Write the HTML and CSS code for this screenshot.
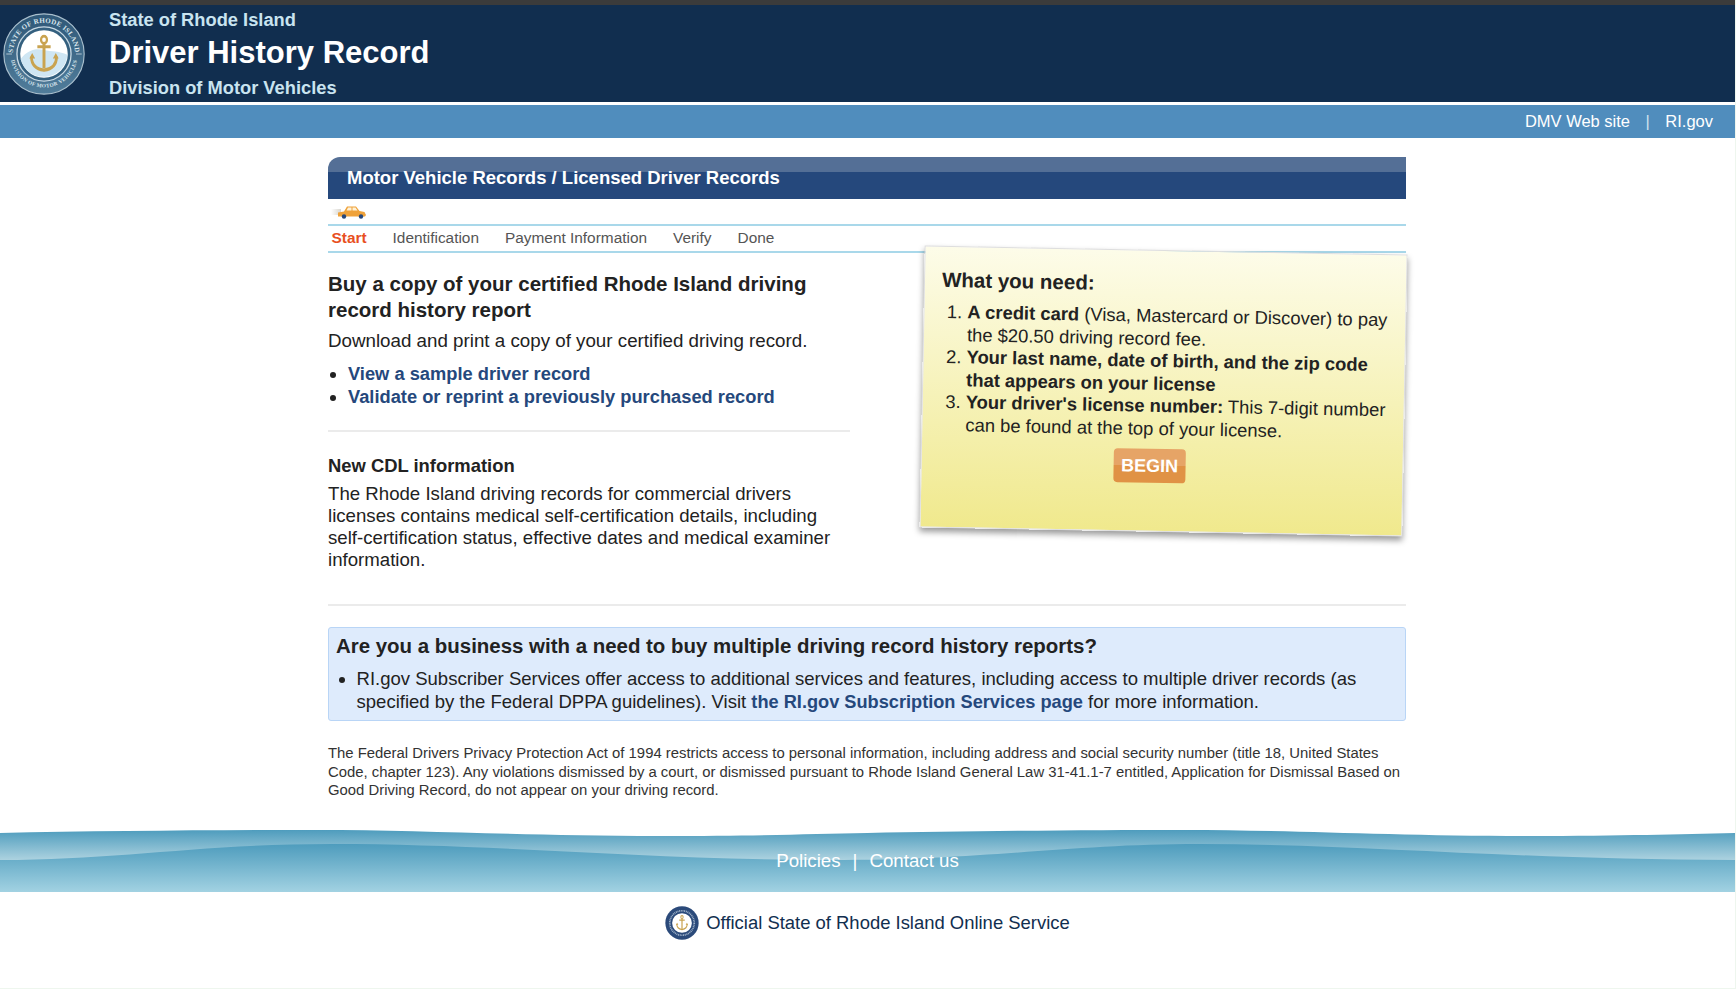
FILE: index.html
```html
<!DOCTYPE html>
<html lang="en">
<head>
    <meta charset="UTF-8">
    <title>Driver History Record</title>
    <link rel="stylesheet" href="styles.css">
</head>
<body>
    <svg class="defs" width="0" height="0" aria-hidden="true">
        <symbol id="anchor" viewBox="0 0 40 44" preserveAspectRatio="none">
            <circle cx="20" cy="6" r="4" fill="none" stroke="#c9a350" stroke-width="3"/>
            <path d="M11 14h18" stroke="#c9a350" stroke-width="3.4" fill="none"/>
            <path d="M20 10v28" stroke="#c9a350" stroke-width="4" fill="none"/>
            <path d="M3 25c0 10 8 14 17 15 9-1 17-5 17-15" stroke="#c9a350" stroke-width="3.6" fill="none"/>
            <path d="M0 27l4-6 4 6zM32 27l4-6 4 6z" fill="#c9a350"/>
        </symbol>
    </svg>

    <div class="topline"></div>

    <header class="header">
        <svg class="seal" viewBox="0 0 100 100" role="img" aria-label="Seal of the State of Rhode Island">
            <defs>
                <linearGradient id="ring" x1="0" y1="0" x2="0" y2="1">
                    <stop offset="0" stop-color="#2f5878"/>
                    <stop offset="1" stop-color="#517d9b"/>
                </linearGradient>
                <path id="seal-top" d="M12 50a38 38 0 0 1 76 0"/>
                <path id="seal-bottom" d="M9 50a41 41 0 0 0 82 0"/>
            </defs>
            <circle cx="50" cy="50" r="49" fill="url(#ring)" stroke="#a9bfcd" stroke-width="1.4"/>
            <text class="seal-text"><textPath href="#seal-top" startOffset="50%" text-anchor="middle">STATE OF RHODE ISLAND</textPath></text>
            <text class="seal-text small"><textPath href="#seal-bottom" startOffset="50%" text-anchor="middle">DIVISION OF MOTOR VEHICLES</textPath></text>
            <path d="M4 50h7M89 50h7" stroke="#c6d6e0" stroke-width="1"/>
            <circle cx="50" cy="50" r="33" fill="#34607f" stroke="#c8d9e4" stroke-width="1.6"/>
            <circle cx="50" cy="50" r="29" fill="#fff"/>
            <path d="M21.500 56c9-11 18-13 28-11 10 2 19 1 29 6a29 29 0 0 1-57 5z" fill="#cfe6f3"/>
            <use href="#anchor" x="32" y="26" width="36" height="48"/>
        </svg>
        <div class="header-titles">
            <div class="state">State of Rhode Island</div>
            <h1>Driver History Record</h1>
            <div class="division">Division of Motor Vehicles</div>
        </div>
    </header>

    <nav class="topnav">
        <a href="#">DMV Web site</a>
        <span class="sep">|</span>
        <a href="#">RI.gov</a>
    </nav>

    <main class="content">
        <h2 class="section-title">Motor Vehicle Records / Licensed Driver Records</h2>

        <div class="car-row">
            <svg class="car" viewBox="0 0 40 16" width="40" height="16" aria-hidden="true">
                <defs>
                    <linearGradient id="blur" x1="0" y1="0" x2="1" y2="0">
                        <stop offset="0" stop-color="#fff"/>
                        <stop offset="1" stop-color="#d8d5ce"/>
                    </linearGradient>
                </defs>
                <rect x="3" y="5" width="10" height="6" fill="url(#blur)"/>
                <path d="M10 8.500l6-1 3-5h9l3.500 4.500 5 1 1.500 3-1 1.500h-27z" fill="#efa23a"/>
                <path d="M20 3.500h3.500v3h-5zM24.500 3.500h3l2 3h-5z" fill="#fff1d6"/>
                <circle cx="16" cy="12.500" r="2.200" fill="#27487c"/>
                <circle cx="33" cy="12.500" r="2.200" fill="#27487c"/>
            </svg>
        </div>

        <ul class="steps">
            <li class="active">Start</li>
            <li>Identification</li>
            <li>Payment Information</li>
            <li>Verify</li>
            <li>Done</li>
        </ul>

        <div class="columns">
            <div class="left-col">
                <h3 class="lead">Buy a copy of your certified Rhode Island driving record history report</h3>
                <p class="lead-text">Download and print a copy of your certified driving record.</p>
                <ul class="links">
                    <li><a href="#">View a sample driver record</a></li>
                    <li><a href="#">Validate or reprint a previously purchased record</a></li>
                </ul>
                <hr class="rule">
                <h4 class="cdl-title">New CDL information</h4>
                <p class="cdl-text">The Rhode Island driving records for commercial drivers licenses contains medical self-certification details, including self-certification status, effective dates and medical examiner information.</p>
            </div>

            <aside class="note">
                <h3>What you need:</h3>
                <ol>
                    <li><b>A credit card</b> (Visa, Mastercard or Discover) to pay the $20.50 driving record fee.</li>
                    <li><b>Your last name, date of birth, and the zip code that appears on your license</b></li>
                    <li><b>Your driver's license number:</b> This 7-digit number can be found at the top of your license.</li>
                </ol>
                <div class="note-action">
                    <a class="begin" href="#">BEGIN</a>
                </div>
            </aside>
        </div>

        <hr class="rule full">

        <section class="business">
            <h3>Are you a business with a need to buy multiple driving record history reports?</h3>
            <ul>
                <li>RI.gov Subscriber Services offer access to additional services and features, including access to multiple driver records (as specified by the Federal DPPA guidelines). Visit <a href="#">the RI.gov Subscription Services page</a> for more information.</li>
            </ul>
        </section>

        <p class="fine-print">The Federal Drivers Privacy Protection Act of 1994 restricts access to personal information, including address and social security number (title 18, United States Code, chapter 123). Any violations dismissed by a court, or dismissed pursuant to Rhode Island General Law 31-41.1-7 entitled, Application for Dismissal Based on Good Driving Record, do not appear on your driving record.</p>
    </main>

    <footer class="footer">
        <div class="wave-band">
            <svg class="wave" viewBox="0 0 1736 62" preserveAspectRatio="none" aria-hidden="true">
                <defs>
                    <linearGradient id="wave-upper" gradientUnits="userSpaceOnUse" x1="0" y1="0" x2="0" y2="32">
                        <stop offset="0" stop-color="#4e9cbd"/>
                        <stop offset="1" stop-color="#b3d6e2"/>
                    </linearGradient>
                    <linearGradient id="wave-lower" gradientUnits="userSpaceOnUse" x1="0" y1="14" x2="0" y2="62">
                        <stop offset="0" stop-color="#4e9cbd"/>
                        <stop offset="1" stop-color="#a2d2e2"/>
                    </linearGradient>
                </defs>
                <path d="M0 3C100 1 220 0 315 0C430 0 520 6 660 6C760 6 810 4 868 3C968 1 1088 0 1183 0C1298 0 1388 6 1528 6C1628 6 1678 4 1736 3V62H0Z" fill="url(#wave-upper)"/>
                <path d="M0 30C120 30 200 14 332 14C500 14 650 30 830 30C990 30 1068 14 1200 14C1368 14 1518 30 1736 30V62H0Z" fill="url(#wave-lower)"/>
            </svg>
            <div class="footer-links">
                <a href="#">Policies</a>
                <span class="sep">|</span>
                <a href="#">Contact us</a>
            </div>
        </div>
        <div class="official">
            <svg class="mini-seal" viewBox="0 0 100 100" aria-hidden="true">
                <circle cx="50" cy="50" r="49" fill="#2b4a7a"/>
                <circle cx="50" cy="50" r="36" fill="none" stroke="#9fb2c9" stroke-width="5" stroke-dasharray="3 2"/>
                <circle cx="50" cy="50" r="29" fill="#fff"/>
                <use href="#anchor" x="32" y="26" width="36" height="48"/>
            </svg>
            <span>Official State of Rhode Island Online Service</span>
        </div>
    </footer>
</body>
</html>
```

FILE: styles.css
```css
* {
    box-sizing: border-box;
}

body {
    margin: 0;
    font-family: "Liberation Sans", Arial, sans-serif;
    color: #222;
    background: white;
    border-right: 1px solid #eef6ee;
}

a {
    text-decoration: none;
}

.defs {
    position: absolute;
}

.topline {
    height: 5px;
    background: #3b3b3b;
}

.header {
    height: 97px;
    background: #112e4f;
    display: flex;
    align-items: flex-start;
    padding-left: 3px;
    gap: 24px;
}

.seal {
    width: 82px;
    height: 82px;
    flex: none;
    align-self: center;
    margin-top: 1px;
}

.seal-text {
    font-family: "Liberation Serif", serif;
    font-size: 8.5px;
    font-weight: 700;
    fill: #dbe7ee;
    letter-spacing: 0.4px;
}

.seal-text.small {
    font-size: 6.5px;
}

.state, .division {
    font-size: 18.300px;
    font-weight: 700;
    color: #c9e4f0;
    line-height: 22px;
}

.header h1 {
    margin: 1px 0 2.5px;
    font-size: 31px;
    line-height: 42px;
    font-weight: 700;
    color: white;
}

.header-titles {
    margin-top: 4px;
}

.topnav {
    margin-top: 3px;
    height: 33px;
    background: #508dbd;
    display: flex;
    justify-content: flex-end;
    align-items: center;
    padding-right: 22px;
    gap: 15.5px;
    font-size: 16.500px;
    color: #cfe2ee;
}

.topnav a {
    color: white;
}

.content {
    width: 1078px;
    margin: 19px 0 0 328px;
}

.section-title {
    margin: 0;
    height: 42px;
    padding-left: 19px;
    font-size: 18.500px;
    line-height: 42px;
    font-weight: 700;
    color: white;
    border-radius: 12px 0 0 0;
    background: linear-gradient(#546f96 0, #546f96 15px, #25487c 15px);
}

.car-row {
    height: 25px;
    padding: 5px 0 0;
}

.car {
    display: block;
}

.steps {
    list-style: none;
    margin: 0;
    padding: 0 0 2px 3.5px;
    height: 29px;
    display: flex;
    gap: 26px;
    align-items: center;
    font-size: 15.400px;
    color: #555;
    border-top: 2px solid #a9d8ea;
    border-bottom: 2px solid #a9d8ea;
}

.steps .active {
    color: #e8501f;
    font-weight: 700;
}

.columns {
    display: flex;
    gap: 72px;
    align-items: flex-start;
}

.left-col {
    width: 522px;
    flex: none;
}

.lead {
    margin: 18px 0 0;
    font-size: 20.500px;
    line-height: 26px;
    font-weight: 700;
}

.lead-text {
    margin: 6px 0 0;
    font-size: 18.750px;
    line-height: 24px;
}

.links {
    margin: 9px 0 0;
    padding: 0 0 0 20px;
    font-size: 18.300px;
    line-height: 23px;
}

.links a {
    color: #25487c;
    font-weight: 700;
}

.rule {
    border: none;
    height: 2px;
    background: #ebebeb;
    margin: 22px 0 0;
}

.rule.full {
    margin-top: 0;
}

.cdl-title {
    margin: 23px 0 0;
    font-size: 18.400px;
    line-height: 22px;
    font-weight: 700;
}

.cdl-text {
    margin: 6px 0 0;
    font-size: 18.650px;
    line-height: 22px;
    height: 121px;
}

.note {
    width: 483px;
    height: 282px;
    flex: none;
    margin-top: -3px;
    padding: 20px 16px 0 17px;
    border: 1px solid #dedede;
    background: linear-gradient(#fdfce9, #f0e98d);
    box-shadow: 0 4px 6px rgba(0, 0, 0, 0.4);
    transform: rotate(1.07deg);
}

.note h3 {
    margin: 0;
    font-size: 20.500px;
    line-height: 26px;
    font-weight: 700;
}

.note ol {
    margin: 8px 0 0;
    padding: 0 0 0 26px;
    font-size: 18.400px;
    line-height: 22.6px;
}

.note-action {
    margin-top: 8px;
    display: flex;
    justify-content: center;
    padding-right: 26px;
}

.begin {
    width: 72px;
    height: 34px;
    border-radius: 4px;
    background: linear-gradient(#e6a466 0, #e6a466 50%, #e09245 50%);
    color: white;
    font-size: 18px;
    font-weight: 700;
    line-height: 34px;
    text-align: center;
}

.business {
    margin-top: 21px;
    height: 94px;
    padding: 5px 8px 0 7px;
    background: #deebfc;
    border: 1px solid #b9d5f6;
    border-radius: 3px;
}

.business h3 {
    margin: 0;
    font-size: 20.450px;
    line-height: 26px;
    font-weight: 700;
}

.business ul {
    margin: 9px 0 0;
    padding: 0 0 0 20.5px;
    font-size: 18.550px;
    line-height: 22.6px;
}

.business a {
    color: #25487c;
    font-size: 18.200px;
    font-weight: 700;
}

.fine-print {
    margin: 23px 0 0;
    font-size: 14.870px;
    line-height: 18.500px;
    color: #333;
}

.footer {
    margin-top: 30px;
}

.wave-band {
    position: relative;
    height: 62px;
}

.wave {
    position: absolute;
    inset: 0;
    width: 100%;
    height: 100%;
    display: block;
}

.footer-links {
    position: relative;
    height: 62px;
    padding-top: 18px;
    display: flex;
    justify-content: center;
    gap: 12px;
    font-size: 18.700px;
    line-height: 26px;
    color: white;
}

.footer-links a {
    color: white;
}

.official {
    height: 97px;
    padding-top: 14px;
    display: flex;
    justify-content: center;
    align-items: flex-start;
    gap: 7px;
    font-size: 18.450px;
    line-height: 34px;
    color: #112e4f;
    border-bottom: 1px solid #eef6ee;
}

.mini-seal {
    width: 34px;
    height: 34px;
}
```
